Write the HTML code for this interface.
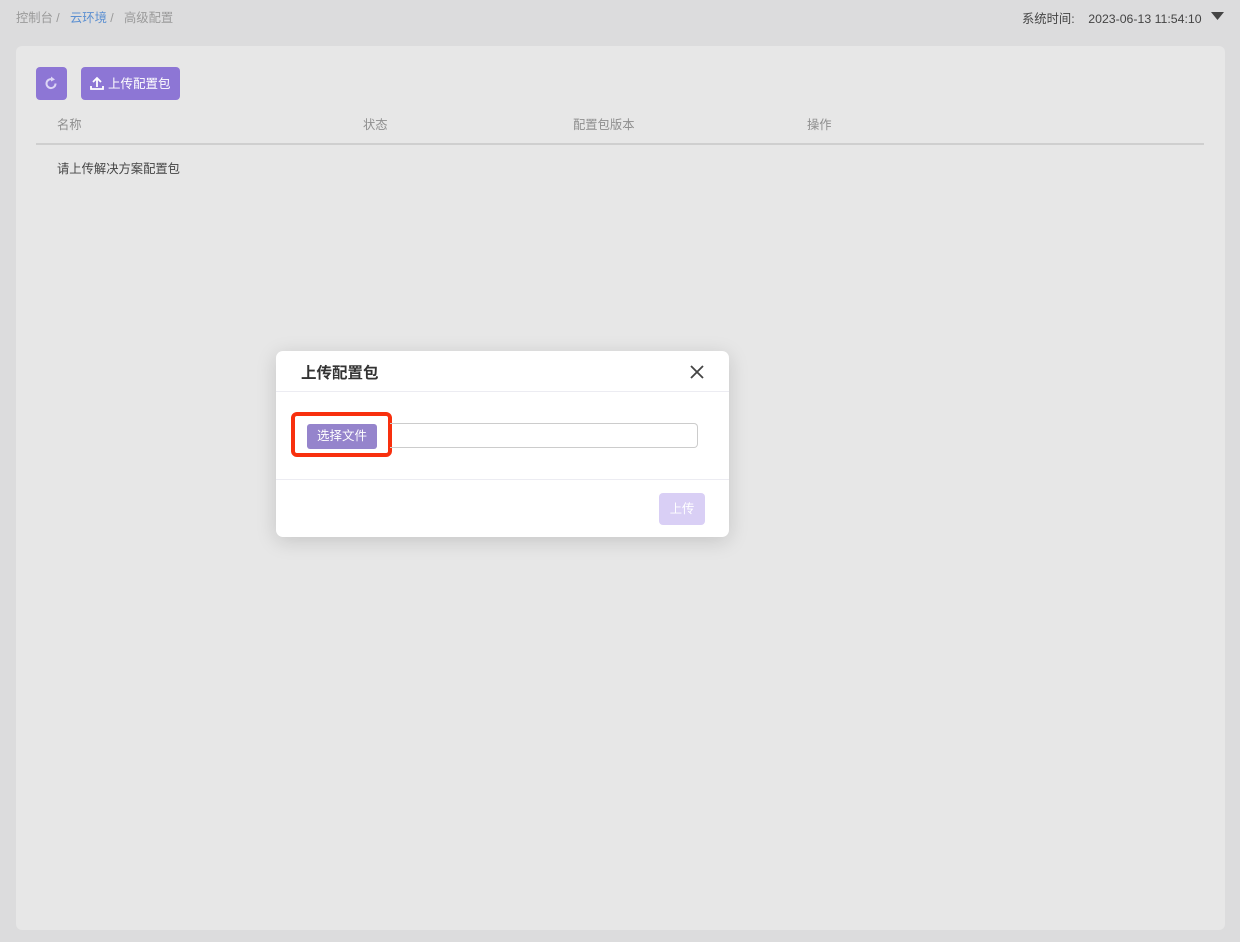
<!DOCTYPE html>
<html><head><meta charset="utf-8"><style>
*{box-sizing:border-box;margin:0;padding:0}
body{width:1240px;height:942px;background:#dcdcdd;font-family:"Liberation Sans","Noto Sans CJK SC",sans-serif;position:relative;overflow:hidden;font-size:12.3px}
.a{position:absolute}
.card{left:16px;top:46px;width:1209px;height:884px;background:#e7e7e7;border-radius:6px}
.btn{background:#8d76d5;border-radius:4px;color:#fff}
.hd{top:115px;color:#8e8e8e}
</style></head><body>
<div class="a" style="left:16px;top:8px;color:#9a9a9a">控制台 /&nbsp;&nbsp; <span style="color:#5b8fd1">云环境</span> /&nbsp;&nbsp; 高级配置</div>
<div class="a" style="left:1022px;top:9px;color:#444">系统时间:&nbsp;&nbsp;&nbsp; 2023-06-13 11:54:10</div>
<svg class="a" style="left:1211px;top:12px" width="14" height="9"><path d="M0 0H13L6.5 8Z" fill="#444"/></svg>
<div class="a card"></div>
<div class="a btn" style="left:36px;top:67px;width:31px;height:33px"><svg width="31" height="33"><path d="M19.5 16.5A4.5 4.5 0 1 1 16 12.2" stroke="#ddd6f5" stroke-width="2" fill="none"/><path d="M15 9.5L19 12.5L15 14.5Z" fill="#ddd6f5"/></svg></div>
<div class="a btn" style="left:81px;top:67px;width:99px;height:33px;font-size:12.5px;line-height:34px;padding-left:27px">上传配置包</div>
<svg class="a" style="left:90px;top:76px" width="14" height="14"><path d="M7 11V2M3 6L7 2L11 6M1 10V13H13V10" stroke="#fff" stroke-width="1.8" fill="none"/></svg>
<div class="a hd" style="left:57px">名称</div>
<div class="a hd" style="left:363px">状态</div>
<div class="a hd" style="left:573px">配置包版本</div>
<div class="a hd" style="left:807px">操作</div>
<div class="a" style="left:36px;top:143px;width:1168px;height:2px;background:#cfcfcf"></div>
<div class="a" style="left:57px;top:159px;color:#444">请上传解决方案配置包</div>
<div class="a" style="left:276px;top:351px;width:453px;height:186px;background:#fff;border-radius:7px;box-shadow:0 4px 20px rgba(0,0,0,.15)">
<div class="a" style="left:25px;top:10px;font-size:15.5px;font-weight:bold;color:#333">上传配置包</div>
<svg class="a" style="left:414px;top:14px" width="14" height="14"><path d="M1 1L13 13M13 1L1 13" stroke="#444" stroke-width="1.8"/></svg>
<div class="a" style="left:0;top:40px;width:453px;height:1px;background:#ececf2"></div>
<div class="a" style="left:15px;top:61px;width:101px;height:45px;border:4px solid #f8300e;border-radius:6px"></div>
<div class="a" style="left:114px;top:72px;width:308px;height:25px;border:1px solid #ccc;border-left:none;border-radius:0 4px 4px 0"></div>
<div class="a" style="left:31px;top:73px;width:70px;height:25px;background:#9584cc;border-radius:3px;color:#fff;font-size:12.5px;line-height:25px;text-align:center">选择文件</div>
<div class="a" style="left:0;top:128px;width:453px;height:1px;background:#ececf2"></div>
<div class="a" style="left:383px;top:142px;width:46px;height:32px;background:#d9cff5;border-radius:4px;color:#fff;line-height:32px;text-align:center">上传</div>
</div>
</body></html>
